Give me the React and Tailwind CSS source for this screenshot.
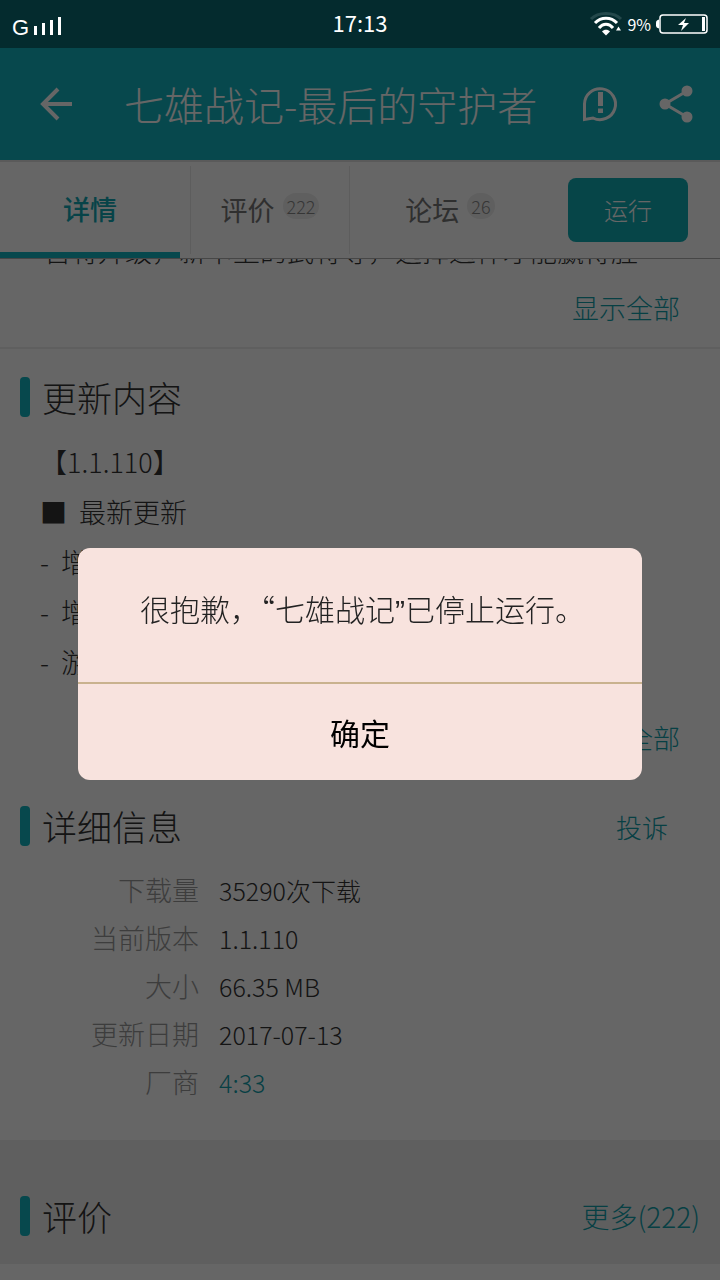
const details = [
  { label: "下载量", value: "35290次下载" },
  { label: "当前版本", value: "1.1.110" },
  { label: "大小", value: "66.35 MB" },
  { label: "更新日期", value: "2017-07-13" },
  { label: "厂商", value: "4:33", link: true },
];

const changes = [
  { mark: "■", text: "最新更新" },
  { mark: "-", text: "增加" },
  { mark: "-", text: "增加" },
  { mark: "-", text: "游戏" },
];

function StatusBar() {
  return (
    <div className="relative z-20 h-12 px-3 grid grid-cols-3 items-center bg-[#042b2e] text-white">
      <div className="pt-1 flex items-center gap-1">
        <span className="text-[22px] leading-none pt-1 font-['Liberation_Sans']">G</span>
        <svg width="30" height="20" viewBox="0 0 30 20" fill="currentColor" aria-hidden="true">
          <rect x="1" y="10" width="3" height="9" />
          <rect x="9" y="7" width="3" height="12" />
          <rect x="17" y="4" width="3" height="15" />
          <rect x="25" y="1" width="3" height="18" />
        </svg>
      </div>

      <div className="pb-1 text-center text-[22px] leading-none">17:13</div>

      <div className="flex items-center justify-end gap-1">
        <svg width="34" height="26" viewBox="0 0 34 26" fill="none" stroke="#fff" strokeWidth="3" aria-hidden="true">
          <path d="M2 8C9 .5 25 .5 32 8" stroke="#24484b" />
          <path d="M6 12C12 5.500 22 5.500 28 12" />
          <path d="M10 17C14 12 20 12 24 17" />
          <path d="M13 20.500C15 18 19 18 21 20.500L17 24.500Z" fill="#fff" stroke="none" />
          <path d="M27 19.500h5l-2.500-4z" fill="#fff" stroke="none" />
        </svg>
        <span className="text-base leading-none">9%</span>
        <svg width="53" height="20" viewBox="0 0 53 20" fill="none" aria-hidden="true">
          <path d="M4 5.500C2 6 1 7 1 8.500v3c0 1.500 1 2.500 3 3z" fill="#fff" />
          <rect x="5" y="1" width="47" height="18" rx="3" stroke="#fff" strokeWidth="1.500" />
          <rect x="47" y="3" width="3" height="14" fill="#fff" />
          <path d="M31 4l-8 7h5l-2 6 8-8h-5z" fill="#fff" />
        </svg>
      </div>
    </div>
  );
}

function AppHeader() {
  return (
    <header className="h-28 pl-9 pr-6 flex items-center bg-[#12b4c0] text-white">
      <button aria-label="返回">
        <svg width="40" height="40" viewBox="0 0 40 40" fill="none" stroke="currentColor" strokeWidth="4">
          <path d="M36 20H7M22 5L7 20L22 35" />
        </svg>
      </button>
      <h1 className="flex-1 pl-12 text-[40px] leading-none font-light whitespace-nowrap">七雄战记-最后的守护者</h1>
      <button aria-label="举报">
        <svg width="40" height="40" viewBox="0 0 40 40" fill="none" stroke="currentColor" strokeWidth="3">
          <path d="M4.500 35.500V20A15.500 15.500 0 1 1 13 34Z" />
          <path d="M20.500 8v14M20.500 24.500v4.500" strokeWidth="5" />
        </svg>
      </button>
      <button className="ml-9" aria-label="分享">
        <svg width="40" height="40" viewBox="0 0 40 40" fill="currentColor" stroke="currentColor" strokeWidth="3">
          <path d="M31 7L9 20L31 33" fill="none" />
          <circle cx="31" cy="7" r="4" />
          <circle cx="9" cy="20" r="4" />
          <circle cx="31" cy="33" r="4" />
        </svg>
      </button>
    </header>
  );
}

function Badge({ children }) {
  return (
    <span className="mb-2 h-[26px] min-w-[26px] px-1 rounded-full bg-[#ededed] text-[#888] text-lg leading-[26px] font-light text-center">
      {children}
    </span>
  );
}

function Tabs() {
  return (
    <nav className="h-[99px] grid grid-cols-4 border-t-2 border-b border-t-[#e0e0e0] border-b-[#b0b0b0] bg-white text-[27px]">
      <button className="border-b-6 border-[#12b4c0] pt-1 text-[#12a9b5] font-medium">详情</button>
      <button className="my-1 mx-[10px] flex items-center justify-center gap-2 border-x border-[#e8e8e8] text-[#777]">
        评价 <Badge>222</Badge>
      </button>
      <button className="my-1 flex items-center justify-center gap-2 text-[#777]">
        论坛 <Badge>26</Badge>
      </button>
      <button className="my-4 ml-7 mr-8 rounded-lg bg-[#0fadb5] text-white text-2xl font-light">运行</button>
    </nav>
  );
}

function SectionTitle({ title, action }) {
  return (
    <div className="h-10 pl-5 flex items-center">
      <span className="w-[10px] h-10 rounded bg-[#12b4c0]" />
      <h2 className="flex-1 pl-3 text-[35px] leading-10 font-light text-[#333]">{title}</h2>
      {action}
    </div>
  );
}

function StoppedDialog() {
  return (
    <div className="fixed inset-0 z-10 pt-12 px-[78px] flex items-center justify-center bg-black/60">
      <div role="alertdialog" aria-labelledby="stopped-message" className="w-full rounded-xl overflow-hidden bg-[#f8e3de]">
        <p id="stopped-message" className="pt-10 pb-[54px] pl-[62px] text-[30px] leading-10 font-light text-[#222] whitespace-nowrap">
          很抱歉，“七雄战记<span className="leading-none font-['Liberation_Sans']">”</span>已停止运行。
        </p>
        <button className="w-full h-[98px] border-t-2 border-[#c9b28e] text-[30px] text-black">确定</button>
      </div>
    </div>
  );
}

export default function App() {
  return (
    <div className="h-screen overflow-hidden flex flex-col bg-white font-['Noto_Sans_CJK_SC',sans-serif]">
      <StatusBar />
      <AppHeader />
      <Tabs />

      <main className="flex-1 overflow-hidden text-[28px] font-light text-[#333]">
        {/* Description, scrolled under the tabs */}
        <section className="border-b-2 border-[#eee]">
          <div className="h-7 pl-11 overflow-hidden flex items-start">
            <p className="-mt-6 text-[27px] leading-8 whitespace-nowrap">召将升级，新卡上的武将等，选择这样才能赢得胜</p>
          </div>
          <div className="pb-[19px] pr-10 text-right leading-10">
            <a href="#intro" className="text-[27px] text-[#12a0ab]">显示全部</a>
          </div>
        </section>

        <section className="pt-7">
          <SectionTitle title="更新内容" />
          <div className="pt-5 pl-10 text-[27px] leading-[50px]">
            <p>【1.1.110】</p>
            <ul>
              {changes.map(({ mark, text }, i) => (
                <li key={i} className="flex gap-3">
                  <span>{mark}</span>
                  {text}
                </li>
              ))}
            </ul>
          </div>
          <div className="pt-[30px] pb-12 pr-10 text-right leading-10">
            <a href="#updates" className="text-[27px] text-[#12a0ab]">显示全部</a>
          </div>
        </section>

        <section className="pb-[34px]">
          <SectionTitle
            title="详细信息"
            action={<a href="#report" className="pr-13 text-[26px] text-[#12a0ab]">投诉</a>}
          />
          <dl className="pt-5 grid grid-cols-[199px_1fr] gap-x-5 leading-[48px]">
            {details.map(({ label, value, link }) => (
              <div key={label} className="contents">
                <dt className="text-right text-[27px] text-[#999]">{label}</dt>
                <dd className="text-[25px]">
                  {link ? <a href="#vendor" className="text-[#12a0ab]">{value}</a> : value}
                </dd>
              </div>
            ))}
          </dl>
        </section>

        <section className="pt-14 pb-7 bg-[#eee]">
          <SectionTitle
            title="评价"
            action={<a href="#reviews" className="pr-5 text-[#12a0ab]">更多(222)</a>}
          />
        </section>
      </main>

      <StoppedDialog />
    </div>
  );
}
